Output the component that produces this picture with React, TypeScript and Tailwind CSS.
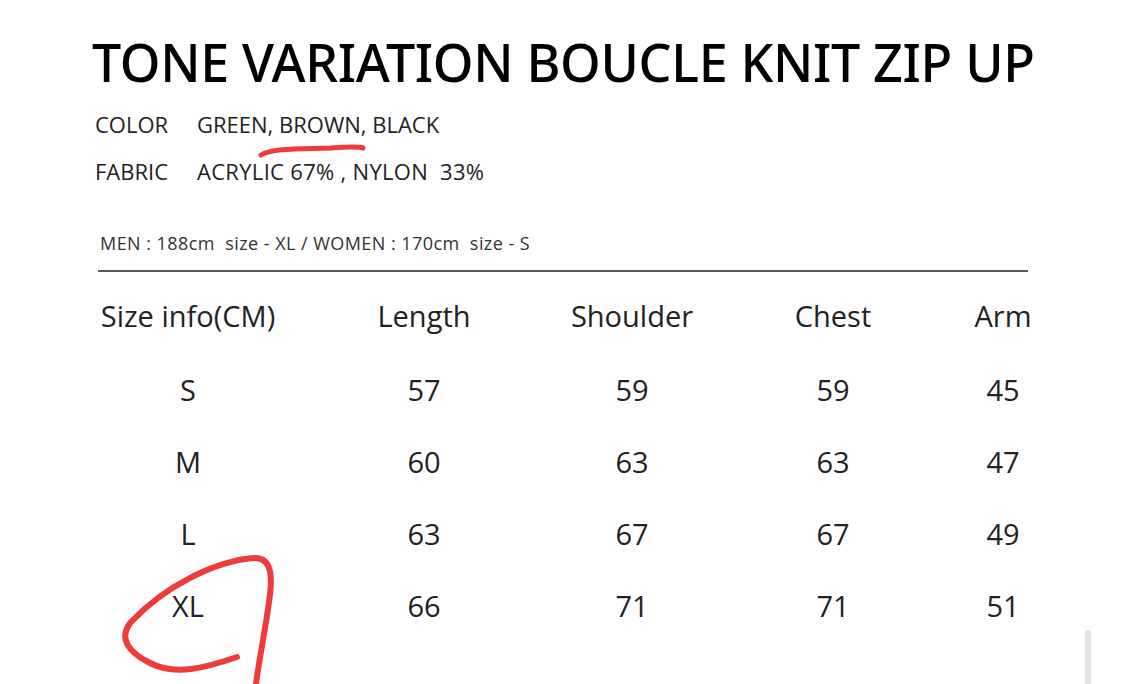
import React from 'react'

const headers = ['Size info(CM)', 'Length', 'Shoulder', 'Chest', 'Arm']

const rows = [
  ['S', '57', '59', '59', '45'],
  ['M', '60', '63', '63', '47'],
  ['L', '63', '67', '67', '49'],
  ['XL', '66', '71', '71', '51'],
]

const grid = 'grid grid-cols-[200px_272px_144px_258px_82px]'

export default function App() {
  return (
    <div className="relative w-[1125px] h-[684px] overflow-hidden bg-white text-[#1a1a1a] font-['Open_Sans',sans-serif]">
      <div className="pl-[92px] pt-[30px]">
        <h1 className="font-['Noto_Sans',sans-serif] text-[52px] leading-[64px] font-medium tracking-[-0.35px] text-black">
          TONE VARIATION BOUCLE KNIT ZIP UP
        </h1>

        <div className="mt-[17px] flex flex-col gap-[21px] pl-[3px] text-[22px] leading-[26px] text-[#222]">
          <div className="flex">
            <span className="w-[102px]">COLOR</span>
            <span>GREEN, BROWN, BLACK</span>
          </div>
          <div className="flex">
            <span className="w-[102px]">FABRIC</span>
            <span className="tracking-[0.3px]">ACRYLIC 67% , NYLON&nbsp; 33%</span>
          </div>
        </div>

        <p className="mt-[48px] pl-[8px] text-[18px] leading-[22px] tracking-[0.45px] text-[#333] whitespace-pre">
          MEN : 188cm  size - XL / WOMEN : 170cm  size - S
        </p>

        <div className="mt-[16px] ml-[6px] w-[930px] h-[2px] bg-[#5a5a5a]" />
      </div>

      <div className="pl-[88px] pt-[24px] text-[29px] leading-[40px] text-[#222]">
        <div className={grid}>
          {headers.map((h) => (
            <div key={h} className="text-center">{h}</div>
          ))}
        </div>
        <div className="mt-[34px] flex flex-col gap-[32px]">
          {rows.map((r) => (
            <div key={r[0]} className={grid}>
              {r.map((c, i) => (
                <div key={i} className="text-center">{c}</div>
              ))}
            </div>
          ))}
        </div>
      </div>

      {/* red marker strokes */}
      <svg className="absolute left-0 top-0 pointer-events-none" width="1125" height="684" viewBox="0 0 1125 684">
        <path d="M261 155 C 272 148, 300 149, 330 148 C 345 147, 356 146, 363 148" stroke="#ef3b3b" strokeWidth="5" fill="none" strokeLinecap="round" />
        <path
          d="M237 657 C 205 668, 175 676, 150 663 C 128 652, 118 638, 131 622 C 165 586, 215 561, 254 558 C 272 557, 273 577, 269 602 C 265 632, 259 660, 256 684"
          stroke="#ef3b3b"
          strokeWidth="6"
          fill="none"
          strokeLinecap="round"
        />
      </svg>

      {/* scrollbar thumb */}
      <div className="absolute left-[1085px] top-[630px] w-[6px] h-[60px] rounded-full bg-[#e2e2e2]" />
    </div>
  )
}
